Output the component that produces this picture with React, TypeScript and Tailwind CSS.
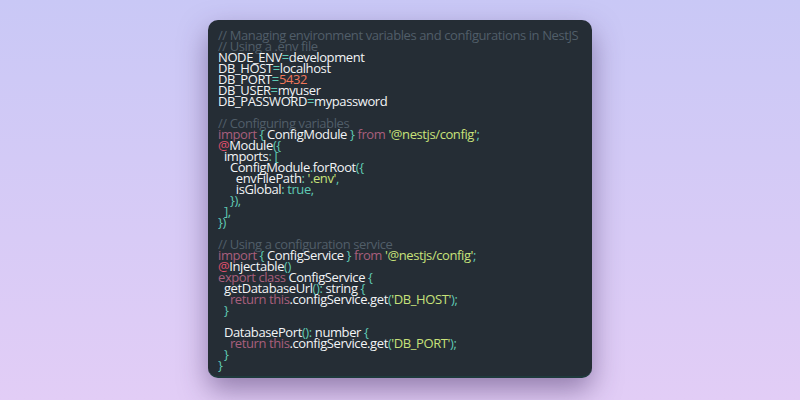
import React from 'react';

type Tok = [string, string];

const C = {
  cm: 'text-[#515e69]',
  tx: 'text-[#f2f4f6]',
  kw: 'text-[#a85f7c]',
  st: 'text-[#c8e27a]',
  pn: 'text-[#5fc9b4]',
  nm: 'text-[#f0775a]',
  at: 'text-[#e0506e]',
};

const lines: Tok[][] = [
  [['// Managing environment variables and configurations in NestJS', C.cm]],
  [['// Using a .env file', C.cm]],
  [['NODE_ENV', C.tx], ['=', C.pn], ['development', C.tx]],
  [['DB_HOST', C.tx], ['=', C.pn], ['localhost', C.tx]],
  [['DB_PORT', C.tx], ['=', C.pn], ['5432', C.nm]],
  [['DB_USER', C.tx], ['=', C.pn], ['myuser', C.tx]],
  [['DB_PASSWORD', C.tx], ['=', C.pn], ['mypassword', C.tx]],
  [],
  [['// Configuring variables', C.cm]],
  [['import', C.kw], [' { ', C.pn], ['ConfigModule', C.tx], [' } ', C.pn], ['from', C.kw], [' ', C.tx], ["'@nestjs/config'", C.st], [';', C.pn]],
  [['@', C.at], ['Module', C.tx], ['({', C.pn]],
  [['  imports', C.tx], [': [', C.pn]],
  [['    ConfigModule', C.tx], ['.', C.pn], ['forRoot', C.tx], ['({', C.pn]],
  [['      envFilePath', C.tx], [': ', C.pn], ["'.env'", C.st], [',', C.pn]],
  [['      isGlobal', C.tx], [': ', C.pn], ['true', C.pn], [',', C.pn]],
  [['    }),', C.pn]],
  [['  ],', C.pn]],
  [['})', C.pn]],
  [],
  [['// Using a configuration service', C.cm]],
  [['import', C.kw], [' { ', C.pn], ['ConfigService', C.tx], [' } ', C.pn], ['from', C.kw], [' ', C.tx], ["'@nestjs/config'", C.st], [';', C.pn]],
  [['@', C.at], ['Injectable', C.tx], ['()', C.pn]],
  [['export class', C.kw], [' ConfigService ', C.tx], ['{', C.pn]],
  [['  getDatabaseUrl', C.tx], ['(): ', C.pn], ['string ', C.tx], ['{', C.pn]],
  [['    return this', C.kw], ['.configService.get', C.tx], ['(', C.pn], ["'DB_HOST'", C.st], [');', C.pn]],
  [['  }', C.pn]],
  [],
  [['  DatabasePort', C.tx], ['(): ', C.pn], ['number ', C.tx], ['{', C.pn]],
  [['    return this', C.kw], ['.configService.get', C.tx], ['(', C.pn], ["'DB_PORT'", C.st], [');', C.pn]],
  [['  }', C.pn]],
  [['}', C.pn]],
];

export default function App() {
  return (
    <div className="flex h-[400px] w-[800px] items-start justify-center bg-gradient-to-b from-[#c9c8f6] to-[#e2cdf6] pt-5">
      <div className="h-[358px] w-[384px] rounded-[10px] border-b-2 border-[#1f3a3c] bg-[#252d35] px-[10px] pt-[10px] shadow-[0_12px_28px_rgba(70,45,100,0.5)]">
        <pre className="font-['Open_Sans',sans-serif] text-[13px] font-medium leading-[11px] tracking-[-0.4px] whitespace-pre">
          {lines.map((line, i) => (
            <div key={i} className="h-[11px]">
              {line.map(([t, c], j) => (
                <span key={j} className={c}>
                  {t}
                </span>
              ))}
            </div>
          ))}
        </pre>
      </div>
    </div>
  );
}
